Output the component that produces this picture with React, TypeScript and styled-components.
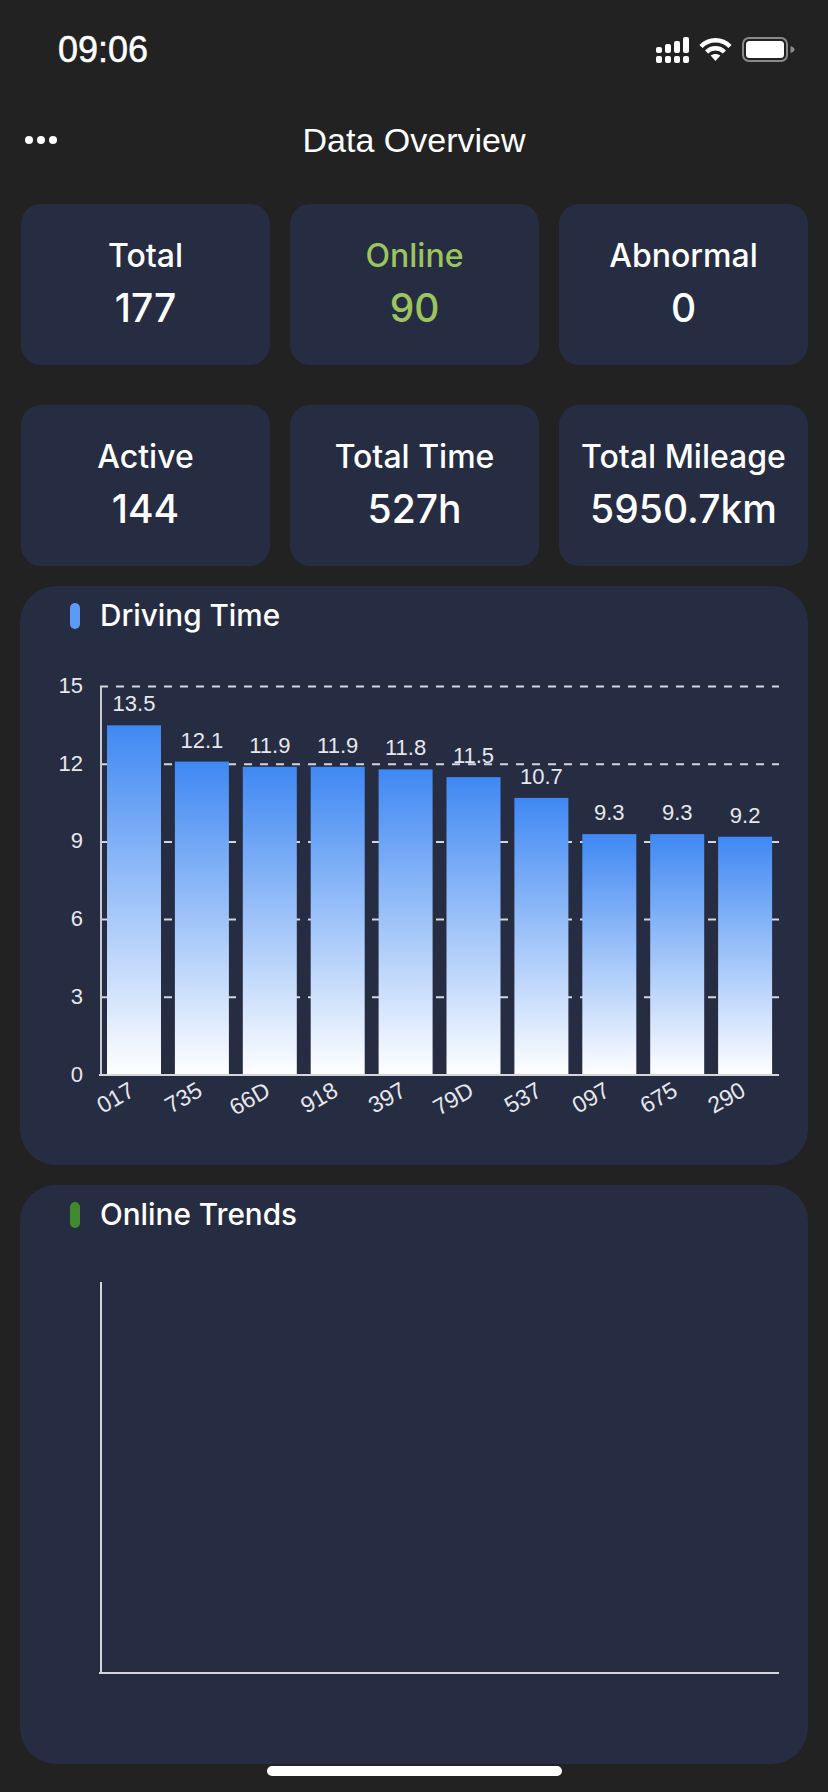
import styled, { createGlobalStyle } from 'styled-components';

const GlobalStyle = createGlobalStyle`
  html, body {
    margin: 0;
    padding: 0;
    background: #222222;
  }
`;

const Page = styled.div`
  width: 828px;
  height: 1792px;
  overflow: hidden;
  background: #222222;
  color: #fff;
  font-family: 'Inter', 'Liberation Sans', sans-serif;
`;

const StatusBar = styled.div`
  height: 100px;
  padding: 32px 33px 0 58px;
  box-sizing: border-box;
  display: flex;
  justify-content: space-between;
  align-items: flex-start;
`;

const Clock = styled.span`
  font-family: 'Liberation Sans', Arial, sans-serif;
  font-size: 36px;
  line-height: 36px;
  -webkit-text-stroke: 0.5px #fff;
`;

const StatusIcons = styled.div`
  display: flex;
  align-items: flex-start;
  gap: 10px;
  padding-top: 5px;
`;

const NavBar = styled.div`
  height: 104px;
  position: relative;
  display: flex;
  align-items: flex-start;
  justify-content: center;
`;

const NavTitle = styled.h1`
  margin: 20px 0 0;
  font-family: 'Liberation Sans', Arial, sans-serif;
  font-size: 34px;
  line-height: 40px;
  font-weight: 400;
`;

const MoreDots = styled.div`
  position: absolute;
  left: 25px;
  top: 36px;
  display: flex;
  gap: 4px;
`;

const Dot = styled.span`
  width: 8px;
  height: 8px;
  border-radius: 50%;
  background: #fff;
`;

const Content = styled.div`
  padding: 0 20px 0 21px;
  display: flex;
  flex-direction: column;
`;

const StatGrid = styled.div`
  display: grid;
  grid-template-columns: repeat(3, 249px);
  grid-auto-rows: 161px;
  column-gap: 20px;
  row-gap: 40px;
`;

const StatCard = styled.div<{ $accent?: string }>`
  background: #262c42;
  border-radius: 20px;
  display: flex;
  flex-direction: column;
  align-items: center;
  padding-top: 34px;
  box-sizing: border-box;
  color: ${(props) => props.$accent || '#fff'};
`;

const StatLabel = styled.div`
  font-size: 32px;
  line-height: 36px;
  font-weight: 500;
`;

const StatValue = styled.div`
  font-size: 39px;
  line-height: 52px;
  font-weight: 500;
  margin-top: 8px;
`;

const Panel = styled.section`
  width: 788px;
  height: 579px;
  margin: 20px 0 0 -1px;
  background: #262c42;
  border-radius: 36px;
  overflow: hidden;
`;

const PanelHeader = styled.div`
  height: 74px;
  padding: 17px 0 0 50px;
  box-sizing: border-box;
  display: flex;
  align-items: flex-start;
  gap: 20px;
`;

const Bullet = styled.span<{ $color: string }>`
  width: 10px;
  height: 26px;
  border-radius: 5px;
  background: ${(props) => props.$color};
`;

const PanelTitle = styled.h2`
  margin: -1px 0 0;
  font-size: 29.7px;
  line-height: 26px;
  font-weight: 500;
`;

const ChartSvg = styled.svg`
  display: block;
  width: 788px;
  height: 505px;

  text {
    font-family: 'Liberation Sans', Arial, sans-serif;
    font-size: 22px;
    fill: #e6e8ee;
  }
`;

const AxisName = styled.text`
  && {
    font-size: 23px;
  }
`;

const HomeBar = styled.div`
  width: 295px;
  height: 10px;
  margin: 2px auto 0;
  border-radius: 5px;
  background: #fff;
`;

const stats = [
  { label: 'Total', value: '177' },
  { label: 'Online', value: '90', accent: '#9dc45f' },
  { label: 'Abnormal', value: '0' },
  { label: 'Active', value: '144' },
  { label: 'Total Time', value: '527h' },
  { label: 'Total Mileage', value: '5950.7km' },
];

const bars = [
  { name: '017', value: 13.5 },
  { name: '735', value: 12.1 },
  { name: '66D', value: 11.9 },
  { name: '918', value: 11.9 },
  { name: '397', value: 11.8 },
  { name: '79D', value: 11.5 },
  { name: '537', value: 10.7 },
  { name: '097', value: 9.3 },
  { name: '675', value: 9.3 },
  { name: '290', value: 9.2 },
];

// chart coordinates, origin is the svg's top left corner
const AXIS_X = 81;
const AXIS_END = 759;
const Y_ZERO = 415;
const UNIT = 25.9;
const LABEL_Y = 428;
const BAR_WIDTH = 54;
const BAR_STEP = 67.9;
const BAR_START = 87;
const ticks = [0, 3, 6, 9, 12, 15];

function SignalIcon() {
  return (
    <svg width="33" height="27" viewBox="0 0 33 27" fill="#fff">
      <rect x="0" y="10" width="6" height="6" rx="2" />
      <rect x="9" y="7" width="6" height="9" rx="2" />
      <rect x="18" y="4" width="6" height="12" rx="2" />
      <rect x="27" y="0" width="6" height="16" rx="2" />
      <rect x="0" y="19" width="6" height="7" rx="2" />
      <rect x="9" y="19" width="6" height="7" rx="2" />
      <rect x="18" y="19" width="6" height="7" rx="2" />
      <rect x="27" y="19" width="6" height="7" rx="2" />
    </svg>
  );
}

function WifiIcon() {
  return (
    <svg width="33" height="24" viewBox="0 0 33 24" fill="none" stroke="#fff" strokeWidth="4.4">
      <path d="M2 9.5C10 1.2 23 1.2 31 9.5" />
      <path d="M7.6 15C12.6 10 20.4 10 25.4 15" />
      <path d="M16.5 24L11.6 18.6C14.4 16.4 18.6 16.4 21.4 18.6Z" fill="#fff" stroke="none" />
    </svg>
  );
}

function BatteryIcon() {
  return (
    <svg width="53" height="25" viewBox="0 0 53 25">
      <rect x="1" y="1" width="44" height="23" rx="6" fill="none" stroke="#8a8a8a" strokeWidth="2" />
      <rect x="4" y="4" width="38" height="17" rx="3.5" fill="#fff" />
      <path d="M48.5 9C51 10 52.5 11 52.5 12.5C52.5 14 51 15 48.5 16Z" fill="#8a8a8a" />
    </svg>
  );
}

function BarChart() {
  return (
    <ChartSvg viewBox="0 0 788 505">
      <defs>
        <linearGradient id="barFill" x1="0" y1="0" x2="0" y2="1">
          <stop offset="0" stopColor="#3f88f3" />
          <stop offset="1" stopColor="#ffffff" />
        </linearGradient>
      </defs>
      {ticks.map((tick) => {
        const y = Y_ZERO - tick * UNIT;
        return (
          <g key={tick}>
            <text x={AXIS_X - 18} y={y - 1} textAnchor="end" dominantBaseline="central">
              {tick}
            </text>
            {tick > 0 && (
              <line x1={AXIS_X - 1} x2={AXIS_END} y1={y} y2={y} stroke="#d4d6dc" strokeWidth="2" strokeDasharray="8 8" />
            )}
          </g>
        );
      })}
      <line x1={AXIS_X} x2={AXIS_X} y1={Y_ZERO - 15 * UNIT} y2={Y_ZERO} stroke="#c9cbd2" strokeWidth="2" />
      {bars.map((bar, i) => {
        const x = BAR_START + i * BAR_STEP;
        const top = Y_ZERO - bar.value * UNIT;
        const center = x + BAR_WIDTH / 2;
        return (
          <g key={bar.name}>
            <rect x={x} y={top} width={BAR_WIDTH} height={bar.value * UNIT} fill="url(#barFill)" />
            <text x={center} y={top - 14} textAnchor="middle">
              {bar.value}
            </text>
            <AxisName
              x={center - 2}
              y={LABEL_Y}
              textAnchor="end"
              dominantBaseline="central"
              transform={`rotate(-30 ${center - 2} ${LABEL_Y})`}
            >
              {bar.name}
            </AxisName>
          </g>
        );
      })}
      <line x1={AXIS_X - 2} x2={AXIS_END} y1={Y_ZERO} y2={Y_ZERO} stroke="#d4d6dc" strokeWidth="2" />
    </ChartSvg>
  );
}

function EmptyChart() {
  return (
    <ChartSvg viewBox="0 0 788 505">
      <line x1={AXIS_X} x2={AXIS_X} y1={23} y2={414} stroke="#d4d6dc" strokeWidth="2" />
      <line x1={AXIS_X - 2} x2={AXIS_END} y1={414} y2={414} stroke="#d4d6dc" strokeWidth="2" />
    </ChartSvg>
  );
}

export default function App() {
  return (
    <Page>
      <GlobalStyle />
      <StatusBar>
        <Clock>09:06</Clock>
        <StatusIcons>
          <SignalIcon />
          <WifiIcon />
          <BatteryIcon />
        </StatusIcons>
      </StatusBar>
      <NavBar>
        <MoreDots>
          <Dot />
          <Dot />
          <Dot />
        </MoreDots>
        <NavTitle>Data Overview</NavTitle>
      </NavBar>
      <Content>
        <StatGrid>
          {stats.map((stat) => (
            <StatCard key={stat.label} $accent={stat.accent}>
              <StatLabel>{stat.label}</StatLabel>
              <StatValue>{stat.value}</StatValue>
            </StatCard>
          ))}
        </StatGrid>
        <Panel>
          <PanelHeader>
            <Bullet $color="#5b9bf5" />
            <PanelTitle>Driving Time</PanelTitle>
          </PanelHeader>
          <BarChart />
        </Panel>
        <Panel>
          <PanelHeader>
            <Bullet $color="#3f8a2c" />
            <PanelTitle>Online Trends</PanelTitle>
          </PanelHeader>
          <EmptyChart />
        </Panel>
      </Content>
      <HomeBar />
    </Page>
  );
}
